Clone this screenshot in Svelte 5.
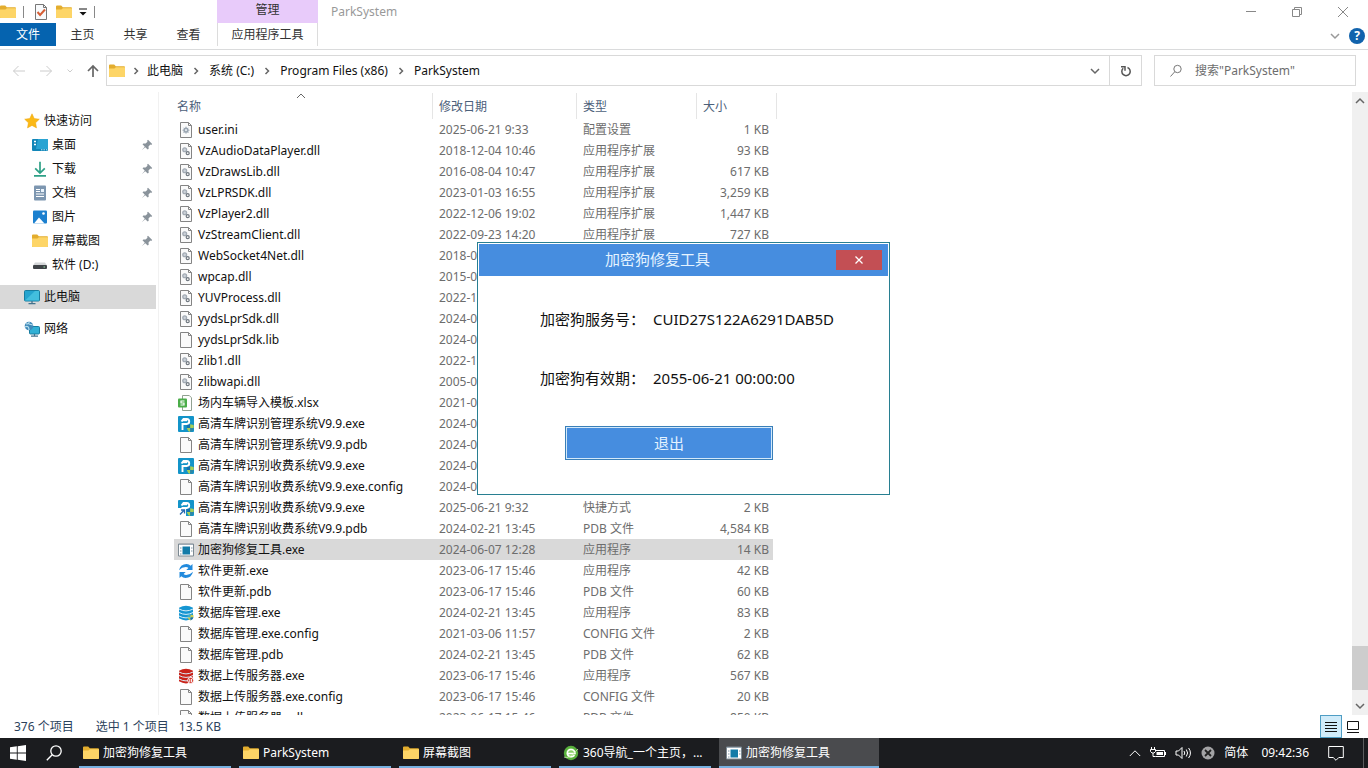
<script lang="ts">
  type FileRow = {
    icon: string;
    name: string;
    date: string;
    type?: string;
    size?: string;
    selected?: boolean;
  };

  const ribbonTabs = ['主页', '共享', '查看'];
  const crumbs = ['此电脑', '系统 (C:)', 'Program Files (x86)', 'ParkSystem'];

  const places = [
    { icon: 'star', label: '快速访问' },
    { icon: 'desktop', label: '桌面', child: true, pinned: true },
    { icon: 'download', label: '下载', child: true, pinned: true },
    { icon: 'document', label: '文档', child: true, pinned: true },
    { icon: 'picture', label: '图片', child: true, pinned: true },
    { icon: 'folder', label: '屏幕截图', child: true, pinned: true },
    { icon: 'drive', label: '软件 (D:)', child: true },
    { icon: 'pc', label: '此电脑', root: true, active: true },
    { icon: 'network', label: '网络', root: true }
  ];

  const files: FileRow[] = [
    { icon: 'ini', name: 'user.ini', date: '2025-06-21 9:33', type: '配置设置', size: '1 KB' },
    { icon: 'dll', name: 'VzAudioDataPlayer.dll', date: '2018-12-04 10:46', type: '应用程序扩展', size: '93 KB' },
    { icon: 'dll', name: 'VzDrawsLib.dll', date: '2016-08-04 10:47', type: '应用程序扩展', size: '617 KB' },
    { icon: 'dll', name: 'VzLPRSDK.dll', date: '2023-01-03 16:55', type: '应用程序扩展', size: '3,259 KB' },
    { icon: 'dll', name: 'VzPlayer2.dll', date: '2022-12-06 19:02', type: '应用程序扩展', size: '1,447 KB' },
    { icon: 'dll', name: 'VzStreamClient.dll', date: '2022-09-23 14:20', type: '应用程序扩展', size: '727 KB' },
    { icon: 'dll', name: 'WebSocket4Net.dll', date: '2018-0' },
    { icon: 'dll', name: 'wpcap.dll', date: '2015-0' },
    { icon: 'dll', name: 'YUVProcess.dll', date: '2022-1' },
    { icon: 'dll', name: 'yydsLprSdk.dll', date: '2024-0' },
    { icon: 'file', name: 'yydsLprSdk.lib', date: '2024-0' },
    { icon: 'dll', name: 'zlib1.dll', date: '2022-1' },
    { icon: 'dll', name: 'zlibwapi.dll', date: '2005-0' },
    { icon: 'sheet', name: '场内车辆导入模板.xlsx', date: '2021-0' },
    { icon: 'park', name: '高清车牌识别管理系统V9.9.exe', date: '2024-0' },
    { icon: 'file', name: '高清车牌识别管理系统V9.9.pdb', date: '2024-0' },
    { icon: 'park', name: '高清车牌识别收费系统V9.9.exe', date: '2024-0' },
    { icon: 'file', name: '高清车牌识别收费系统V9.9.exe.config', date: '2024-0' },
    { icon: 'parklink', name: '高清车牌识别收费系统V9.9.exe', date: '2025-06-21 9:32', type: '快捷方式', size: '2 KB' },
    { icon: 'file', name: '高清车牌识别收费系统V9.9.pdb', date: '2024-02-21 13:45', type: 'PDB 文件', size: '4,584 KB' },
    { icon: 'app', name: '加密狗修复工具.exe', date: '2024-06-07 12:28', type: '应用程序', size: '14 KB', selected: true },
    { icon: 'sync', name: '软件更新.exe', date: '2023-06-17 15:46', type: '应用程序', size: '42 KB' },
    { icon: 'file', name: '软件更新.pdb', date: '2023-06-17 15:46', type: 'PDB 文件', size: '60 KB' },
    { icon: 'db', name: '数据库管理.exe', date: '2024-02-21 13:45', type: '应用程序', size: '83 KB' },
    { icon: 'file', name: '数据库管理.exe.config', date: '2021-03-06 11:57', type: 'CONFIG 文件', size: '2 KB' },
    { icon: 'file', name: '数据库管理.pdb', date: '2024-02-21 13:45', type: 'PDB 文件', size: '62 KB' },
    { icon: 'dbred', name: '数据上传服务器.exe', date: '2023-06-17 15:46', type: '应用程序', size: '567 KB' },
    { icon: 'file', name: '数据上传服务器.exe.config', date: '2023-06-17 15:46', type: 'CONFIG 文件', size: '20 KB' },
    { icon: 'file', name: '数据上传服务器.pdb', date: '2023-06-17 15:46', type: 'PDB 文件', size: '850 KB' }
  ];

  const tasks = [
    { icon: 'folder', label: '加密狗修复工具' },
    { icon: 'folder', label: 'ParkSystem' },
    { icon: 'folder', label: '屏幕截图' },
    { icon: 'browser', label: '360导航_一个主页，...' },
    { icon: 'app', label: '加密狗修复工具', active: true }
  ];
</script>

{#snippet icon(name: string)}
  <svg class="icon" viewBox="0 0 16 16" width="16" height="16" aria-hidden="true">
    {#if name === 'folder'}
      <path d="M0 2.500q0-1 1-1h4.200l1.600 1.700H15q1 0 1 1V13q0 1-1 1H1q-1 0-1-1z" fill="#e3ad2e" />
      <path d="M0 5.600h5.400l1.500-1.400H16V13q0 1-1 1H1q-1 0-1-1z" fill="#fdd567" />
    {:else if name === 'star'}
      <path d="M8 .8l2.200 4.700 5.100.7-3.700 3.600.9 5.100L8 12.400l-4.500 2.500.9-5.100L.7 6.200l5.100-.7z" fill="#fbb917" stroke="#eda40c" stroke-width=".5" />
    {:else if name === 'desktop'}
      <rect y="2" width="16" height="12" rx="1" fill="#1286b8" />
      <path d="M6 2h9q1 0 1 1v9H4z" fill="#2aa4d3" />
      <path d="M2 4.500h2M2 7.500h2" stroke="#fff" stroke-width="1.500" />
      <path d="M9 12.800h1.400M11.500 12.800h1.400M14 12.800h1.200" stroke="#c6ecfa" />
    {:else if name === 'download'}
      <path d="M8 .8v11M3.200 7.300L8 12l4.800-4.700M2 14.800h12" fill="none" stroke="#2ea086" stroke-width="1.700" />
    {:else if name === 'document'}
      <rect x="2" y=".5" width="12" height="15" rx="1" fill="#7d96b0" />
      <path d="M4 4.500h4M4 6.500h4M4 9h8M4 11.500h8" stroke="#fff" />
      <path d="M9 4h3v3H9z" fill="#e9f3fc" />
    {:else if name === 'picture'}
      <rect x="1" y="1.500" width="14" height="13" rx="1" fill="#1c80cf" />
      <path d="M2 14.500L7 8.500l5.500 6z" fill="#fff" />
      <circle cx="11.500" cy="4.500" r="1.300" fill="#fff" />
    {:else if name === 'drive'}
      <path d="M3 5.500h10l2 3H1z" fill="#d4d6d8" />
      <rect x="1" y="8" width="14" height="4" rx="1" fill="#3f4347" />
      <path d="M11.500 10H13" stroke="#92e0a5" />
    {:else if name === 'pc'}
      <rect x=".5" y="1.500" width="15" height="10.500" rx="1" fill="#25a4cf" stroke="#187d9f" />
      <path d="M1 11.500L11 2h4v9.500z" fill="#42bede" />
      <path d="M8 12v2.500M4.500 14.700h7" stroke="#42728d" stroke-width="1.300" />
    {:else if name === 'network'}
      <rect x="5.500" y="5.500" width="10" height="7.500" rx="1" fill="#31b0d5" stroke="#187d9f" />
      <path d="M10.500 13v2M7 15.200h7" stroke="#42728d" stroke-width="1.200" />
      <circle cx="5" cy="5" r="4.300" fill="#3f89b9" />
      <path d="M2 2.700q3 1 3.200-2M1 6q4-2 4 3M5 3l3.800 1" fill="none" stroke="#b9dfed" stroke-width="1.200" />
    {:else if name === 'file' || name === 'ini' || name === 'dll'}
      <path d="M2.500.5h8l3 3v12h-11z" fill="#fafafa" stroke="#848484" />
      <path d="M10.500.5v3h3" fill="none" stroke="#848484" />
      {#if name === 'ini'}
        <circle cx="8" cy="8.200" r="1.900" fill="#dfe4e9" stroke="#98a4b0" stroke-width="1.500" />
        <path d="M8 4.700v1.200M8 10.500v1.200M4.500 8.200h1.200M10.300 8.200h1.200M5.600 5.800l.8.8M10.400 10.600l-.8-.8M5.600 10.600l.8-.8M10.400 5.800l-.8.8" stroke="#98a4b0" />
      {:else if name === 'dll'}
        <circle cx="6.700" cy="6.700" r="1.900" fill="#ccd2d9" stroke="#a3abb4" stroke-width="1.300" />
        <circle cx="9.700" cy="10.200" r="1.500" fill="#eee" stroke="#707880" stroke-width="1.200" />
      {/if}
    {:else if name === 'sheet'}
      <path d="M4.500.5h6.800l2.200 2.300v12.700h-9z" fill="#fff" stroke="#91a191" />
      <rect y="3.500" width="9" height="9" rx="1" fill="#4bad49" />
      <path d="M6.500 6H3v2h3v2H2.500" fill="none" stroke="#fff" stroke-width="1.200" />
    {:else if name === 'park' || name === 'parklink'}
      <rect width="16" height="16" rx="1" fill="#1394c9" />
      <path d="M4.500 14V8h4.300q2.400-.2 2.400-2.500T8.800 3H5.500L3.500 5.500" fill="none" stroke="#fff" stroke-width="1.900" />
      <path d="M4 4.600h5" stroke="#fff" stroke-width="1.200" />
      <path d="M8.800 9l3.400-.8V12H8.800z" fill="#1671ae" />
      <path d="M12.200 8.200l3.500.8v3h-3.500z" fill="#a8cf56" />
      <path d="M8.800 12h3.400v4q-2.800-1-3.400-4z" fill="#a8cf56" />
      <path d="M12.200 12h3.500q-.5 3-3.500 4z" fill="#2f86a5" />
      {#if name === 'parklink'}
        <path d="M0 8h8v8H0z" fill="#fff" />
        <path d="M2 14.500l3.800-4M3 10h3.500v3.500" fill="none" stroke="#286ab1" stroke-width="1.300" />
      {/if}
    {:else if name === 'app'}
      <path d="M.5 2h15v12H.5z" fill="#fff" stroke="#7c8992" />
      <path d="M1 2.500h14" stroke="#9daab4" />
      <path d="M4.500 4.500H12v8H4.500z" fill="#137ba8" />
      <path d="M2 6h1.500M2 9h1.500M2 12h1.500M13 6h1.500M13 9h1.500" stroke="#7f98a8" />
    {:else if name === 'sync'}
      <path d="M1 7.200Q2.500 1 8.500 1q2.600 0 4.200 1.700L14.500 1v6H8.300l2.100-2.100Q9.500 4 7.800 4 4 4 1 7.200zM15 8.800Q13.500 15 7.500 15q-2.600 0-4.200-1.700L1.500 15V9h6.200l-2.100 2.100q.9.900 2.600.9 3.800 0 6.800-3.200z" fill="#238bdd" />
    {:else if name === 'db' || name === 'dbred'}
      <path d="M1 2.800Q8-1.500 15 2.800v10.500q-7 4.300-14 0z" fill={name === 'db' ? '#1696d2' : '#ca231a'} />
      <path d="M1 4q7 3.800 14 0M1 7.500q7 3.800 14 0M1 11q7 3.800 14 0" fill="none" stroke="#d9eff9" />
      {#if name === 'db'}
        <path d="M9.500 10.200l3-.8v3h-3z" fill="#39abd0" />
        <path d="M12.500 9.400l3 .8v2.200h-3zM9.500 12.400h3v3q-2.500-.8-3-3z" fill="#c9cc4d" />
        <path d="M12.500 12.400h3q-.5 2.200-3 3z" fill="#1d71a5" />
      {:else}
        <circle cx="12.700" cy="12.400" r="3" fill="#d43328" stroke="#fff" />
        <path d="M11.800 11v3M13.600 11v3" stroke="#fff" />
      {/if}
    {:else if name === 'browser'}
      <circle cx="8" cy="8" r="6" fill="#8acf69" stroke="#58af3d" stroke-width="2.400" />
      <path d="M4.500 8.500H12q-.5-4-4-4t-3.700 4q.7 3.500 4 3.200 2 0 3.200-1.400" fill="none" stroke="#fff" stroke-width="1.500" />
      <path d="M1 12q5 3 14-8" fill="none" stroke="#d5f0b6" stroke-width=".8" />
    {/if}
  </svg>
{/snippet}

{#snippet chevron(direction: string)}
  <svg class="chevron {direction}" viewBox="0 0 10 10" width="10" height="10" aria-hidden="true">
    {#if direction === 'up'}
      <path d="M1 7l4-4 4 4" />
    {:else if direction === 'down'}
      <path d="M1 3l4 4 4-4" />
    {:else}
      <path d="M3.500 2l3 3-3 3" />
    {/if}
  </svg>
{/snippet}

<div class="screen">
  <header class="ribbon">
    <div class="ribbon-main">
      <div class="quick">
        {@render icon('folder')}
        <span class="rule"></span>
        <svg class="icon props" viewBox="0 0 16 16" width="16" height="16" aria-hidden="true">
          <path d="M2.500.5h8l3 3v12h-11z" fill="#f8fafc" stroke="#777" />
          <path d="M10.500.5v3h3" fill="none" stroke="#777" />
          <path d="M4.500 8l2.600 3L12 5.500" fill="none" stroke="#d65e35" stroke-width="2" />
        </svg>
        {@render icon('folder')}
        <svg viewBox="0 0 8 8" width="8" height="8" aria-hidden="true">
          <path d="M0 1h8" stroke="#111" />
          <path d="M.5 4h7L4 7.500z" fill="#111" />
        </svg>
        <span class="rule"></span>
      </div>
      <div class="tabs">
        <button class="file-tab">文件</button>
        {#each ribbonTabs as tab}
          <button class="tab">{tab}</button>
        {/each}
      </div>
    </div>
    <div class="context">
      <span class="context-title">管理</span>
      <button class="context-tab">应用程序工具</button>
    </div>
    <div class="ribbon-end">
      <div class="title-row">
        <span class="window-title">ParkSystem</span>
        <div class="window-buttons">
          <button aria-label="最小化">
            <svg viewBox="0 0 12 12" width="12" height="12"><path d="M1 5.500h10" /></svg>
          </button>
          <button aria-label="还原">
            <svg viewBox="0 0 12 12" width="12" height="12"><path d="M1.500 3.500h7v7h-7zM3.500 3.500v-2h7v7h-2" /></svg>
          </button>
          <button aria-label="关闭">
            <svg viewBox="0 0 12 12" width="12" height="12"><path d="M1 1l10 10M11 1L1 11" /></svg>
          </button>
        </div>
      </div>
      <div class="help-row">
        <button class="plain light" aria-label="展开功能区">{@render chevron('down')}</button>
        <button class="help" aria-label="帮助">?</button>
      </div>
    </div>
  </header>

  <div class="address-row">
    <div class="history">
      <svg viewBox="0 0 14 14" width="14" height="14"><path d="M13 7H1.500M6.500 2l-5 5 5 5" stroke="#ccc" /></svg>
      <svg viewBox="0 0 14 14" width="14" height="14"><path d="M1 7h11.500M7.500 2l5 5-5 5" stroke="#ccc" /></svg>
      <svg viewBox="0 0 6 6" width="6" height="6"><path d="M.5 1.500L3 4l2.500-2.500" stroke="#ccc" /></svg>
      <svg viewBox="0 0 14 14" width="14" height="14"><path d="M7 13V2M2 7l5-5 5 5" stroke="#666" stroke-width="1.700" /></svg>
    </div>
    <nav class="address" aria-label="地址">
      {@render icon('folder')}
      {#each crumbs as crumb}
        <span class="crumb-sep">{@render chevron('right')}</span>
        <a href="#top">{crumb}</a>
      {/each}
      <button class="plain address-drop" aria-label="以前的位置">{@render chevron('down')}</button>
      <button class="plain refresh" aria-label="刷新">
        <svg viewBox="0 0 12 12" width="12" height="12">
          <path d="M7.500 2.500A4.200 4.200 0 1 1 3.200 3.300M1 1.800h4v4" fill="none" stroke="#555" stroke-width="1.500" />
        </svg>
      </button>
    </nav>
    <label class="search">
      <svg viewBox="0 0 14 14" width="14" height="14" aria-hidden="true">
        <circle cx="8.500" cy="5" r="3.700" /><path d="M5.800 7.700L1.500 12.500" />
      </svg>
      <input type="text" placeholder={'搜索"ParkSystem"'} aria-label="搜索" />
    </label>
  </div>

  <main class="body">
    <nav class="places" aria-label="导航窗格">
      {#each places as place}
        <a href="#top" class="place" class:child={place.child} class:root={place.root} class:active={place.active}>
          {@render icon(place.icon)}
          <span>{place.label}</span>
          {#if place.pinned}
            <svg class="pin" viewBox="0 0 12 12" width="12" height="12" aria-hidden="true">
              <path d="M7 .8L11.200 5l-1 .9-.8-.3L7.500 7.500l.2 2.200-1 .9L4.300 8.200.7 11.300 3.800 7.700 1.500 5.300l.9-.9 2.200.2 1.900-1.900-.4-.9z" />
            </svg>
          {/if}
        </a>
      {/each}
    </nav>

    <section class="files">
      <table>
        <colgroup>
          <col class="col-name" />
          <col class="col-date" />
          <col class="col-type" />
          <col class="col-size" />
        </colgroup>
        <thead>
          <tr>
            <th>名称<span class="sort">{@render chevron('up')}</span></th>
            <th>修改日期</th>
            <th>类型</th>
            <th>大小</th>
          </tr>
        </thead>
        <tbody>
          {#each files as file}
            <tr class:selected={file.selected}>
              <td><span class="file-name">{@render icon(file.icon)}{file.name}</span></td>
              <td>{file.date}</td>
              <td>{file.type ?? ''}</td>
              <td>{file.size ?? ''}</td>
            </tr>
          {/each}
        </tbody>
      </table>
    </section>

    <div class="scrollbar">
      <button class="plain" aria-label="向上滚动">{@render chevron('up')}</button>
      <div class="track-before"></div>
      <div class="thumb"></div>
      <div class="track-after"></div>
      <button class="plain" aria-label="向下滚动">{@render chevron('down')}</button>
    </div>
  </main>

  <footer class="status">
    <span>376 个项目</span>
    <div class="selection">
      <span>选中 1 个项目</span>
      <span>13.5 KB</span>
    </div>
    <div class="views">
      <button class="view on" aria-label="详细信息">
        <svg viewBox="0 0 14 14" width="14" height="14"><path d="M1 2.500h12M1 5.500h12M1 8.500h12M1 11.500h12" /></svg>
      </button>
      <button class="view" aria-label="大图标">
        <svg viewBox="0 0 14 14" width="14" height="14"><path d="M1.500 1.500h11v8h-11zM1 12.500h12" /></svg>
      </button>
    </div>
  </footer>

  <div class="taskbar">
    <button class="start" aria-label="开始">
      <svg viewBox="0 0 16 16" width="16" height="16">
        <path d="M0 2.300l6.800-1v6.300H0zM7.700 1.200L16 0v7.600H7.700zM0 8.400h6.800v6.300l-6.800-1zM7.700 8.400H16V16l-8.300-1.200z" fill="#fff" />
      </svg>
    </button>
    <button class="find" aria-label="搜索">
      <svg viewBox="0 0 16 16" width="16" height="16">
        <circle cx="10" cy="6" r="5.200" fill="none" stroke="#fff" stroke-width="1.300" />
        <path d="M6.200 9.800L.8 15.200" stroke="#fff" stroke-width="1.400" />
      </svg>
    </button>
    <div class="tasks">
      {#each tasks as task}
        <button class="task" class:active={task.active}>
          {@render icon(task.icon)}
          <span>{task.label}</span>
        </button>
      {/each}
    </div>
    <div class="tray">
      <svg viewBox="0 0 12 12" width="12" height="12"><path d="M.8 9L6 3.800 11.200 9" /></svg>
      <svg viewBox="0 0 16 12" width="16" height="12">
        <path d="M6 3.500h8.500v6h-9M1.500 0v2.500M4.500 0v2.500M.5 2.500h5v2L4 6H2L.5 4.500zM3 6v3.500h2.500" />
        <path d="M6.500 5H13v3H6.500zM15 5h1v3h-1z" fill="#fff" stroke="none" />
      </svg>
      <svg viewBox="0 0 17 14" width="17" height="14">
        <path d="M1 5h2.500L7 1.500v11L3.500 9H1zM9 5q1.500 2 0 4M11.300 3.500q2.600 3.500 0 7M13.600 2q3.700 5 0 10" />
      </svg>
      <svg viewBox="0 0 14 14" width="14" height="14">
        <circle cx="7" cy="7" r="6.500" fill="#a3a3a5" stroke="none" />
        <path d="M4 4l6 6M10 4l-6 6" stroke="#222" stroke-width="1.800" />
      </svg>
      <span class="lang">简体</span>
      <time>09:42:36</time>
      <svg class="notice" viewBox="0 0 16 16" width="16" height="16">
        <path d="M.7 1.500h14.600v11h-4.500L8 15.300 5.200 12.500H.7z" />
      </svg>
      <span class="show-desktop"></span>
    </div>
  </div>

  <div class="dialog" role="dialog" aria-labelledby="dialog-title">
    <div class="dialog-bar">
      <h1 id="dialog-title">加密狗修复工具</h1>
      <button class="dialog-close" aria-label="关闭">
        <svg viewBox="0 0 8 8" width="8" height="8"><path d="M.5.5l7 7M7.500.5l-7 7" /></svg>
      </button>
    </div>
    <dl>
      <dt>加密狗服务号：</dt>
      <dd>CUID27S122A6291DAB5D</dd>
      <dt>加密狗有效期：</dt>
      <dd>2055-06-21 00:00:00</dd>
    </dl>
    <button class="exit">退出</button>
  </div>
</div>

<style>
  :global(body) {
    margin: 0;
    background: #fff;
  }

  .screen {
    position: relative;
    display: flex;
    flex-direction: column;
    height: 100vh;
    overflow: hidden;
    font: 12px/16px "Noto Sans", "Noto Sans CJK SC", sans-serif;
    color: #111;
    background: #fff;
  }

  .screen * {
    box-sizing: border-box;
  }

  button,
  input {
    margin: 0;
    padding: 0;
    border: 0;
    background: none;
    font: inherit;
    color: inherit;
  }

  a {
    color: inherit;
    text-decoration: none;
  }

  svg {
    display: block;
    flex-shrink: 0;
  }

  .chevron path {
    fill: none;
    stroke: #666;
    stroke-width: 1.5;
  }

  .plain {
    display: flex;
    align-items: center;
    justify-content: center;
  }

  /* Ribbon */
  .ribbon {
    display: flex;
    height: 50px;
    flex-shrink: 0;
    border-bottom: 1px solid #dadbdc;
  }

  .ribbon-main {
    width: 217px;
  }

  .quick {
    display: flex;
    align-items: center;
    gap: 7px;
    height: 23px;
  }

  .quick .props {
    margin-left: 2px;
  }

  .quick .rule {
    width: 1px;
    height: 12px;
    background: #888;
  }

  .tabs {
    display: flex;
    height: 23px;
  }

  .file-tab {
    width: 56px;
    background: #0563af;
    color: #fff;
  }

  .tab {
    width: 53px;
    color: #333;
  }

  .context {
    display: flex;
    flex-direction: column;
    width: 101px;
  }

  .context-title {
    height: 23px;
    line-height: 20px;
    text-align: center;
    background: #e8cbfa;
    color: #333;
  }

  .context-tab {
    height: 23px;
    border: solid #dcdcdc;
    border-width: 0 1px;
    color: #333;
  }

  .ribbon-end {
    flex: 1;
  }

  .title-row {
    display: flex;
    align-items: center;
    justify-content: space-between;
    height: 23px;
    padding-left: 13px;
  }

  .window-title {
    color: #999;
  }

  .window-buttons {
    display: flex;
    padding-right: 2px;
  }

  .window-buttons button {
    display: flex;
    align-items: center;
    justify-content: center;
    width: 46px;
    height: 20px;
  }

  .window-buttons path {
    fill: none;
    stroke: #888;
  }

  .help-row {
    display: flex;
    align-items: center;
    justify-content: flex-end;
    gap: 9px;
    height: 26px;
    padding-right: 3px;
  }

  .light :global(path) {
    stroke: #999;
  }

  .help {
    width: 16px;
    height: 16px;
    border-radius: 50%;
    background: #1163ad;
    color: #fff;
    font-weight: 700;
    line-height: 16px;
  }

  /* Address bar */
  .address-row {
    display: flex;
    align-items: center;
    height: 42px;
    flex-shrink: 0;
    padding: 0 12px 1px 0;
  }

  .history {
    display: flex;
    align-items: center;
    justify-content: space-between;
    width: 106px;
    padding: 0 6px 0 12px;
  }

  .history svg {
    fill: none;
  }

  .address {
    display: flex;
    align-items: center;
    flex: 1;
    height: 31px;
    padding-left: 2px;
    border: 1px solid #d9d9d9;
  }

  .crumb-sep {
    display: flex;
    justify-content: center;
    width: 26px;
  }

  .icon + .crumb-sep {
    width: 22px;
  }

  .address-drop {
    width: 28px;
    height: 29px;
    margin-left: auto;
  }

  .refresh {
    width: 32px;
    height: 29px;
    border-left: 1px solid #d9d9d9;
  }

  .search {
    display: flex;
    align-items: center;
    gap: 12px;
    width: 202px;
    height: 31px;
    margin-left: 12px;
    padding: 0 14px;
    border: 1px solid #d9d9d9;
  }

  .search svg {
    fill: none;
    stroke: #777;
  }

  .search input {
    flex: 1;
    min-width: 0;
    outline: none;
  }

  .search input::placeholder {
    color: #6d6d6d;
    opacity: 1;
  }

  /* Folder tree and file list */
  .body {
    display: flex;
    flex: 1;
    min-height: 0;
  }

  .places {
    width: 159px;
    padding: 17px 2px 0 0;
    border-right: 1px solid #f1f1f1;
  }

  .place {
    display: flex;
    align-items: center;
    gap: 4px;
    height: 24px;
    padding: 0 3px 0 24px;
  }

  .place.child {
    padding-left: 32px;
  }

  .place.root {
    margin-top: 8px;
  }

  .place.active {
    background: #d9d9d9;
  }

  .pin {
    margin-left: auto;
    fill: #8a939b;
  }

  .files {
    flex: 1;
    min-width: 0;
    padding: 1px 0 0 15px;
    overflow: hidden;
  }

  table {
    width: 603px;
    table-layout: fixed;
    border-spacing: 0;
  }

  .col-name {
    width: 259px;
  }

  .col-date {
    width: 144px;
  }

  .col-type {
    width: 120px;
  }

  .col-size {
    width: 80px;
  }

  th {
    position: relative;
    height: 26px;
    padding: 2px 6px 0;
    border-right: 1px solid #e5e5e5;
    font-weight: 400;
    text-align: left;
    color: #4c607a;
  }

  th:first-child {
    padding-left: 3px;
  }

  .sort {
    position: absolute;
    top: -2px;
    left: 122px;
  }

  .sort :global(path) {
    stroke-width: 1;
  }

  td {
    height: 21px;
    padding: 0 0 0 6px;
    white-space: nowrap;
    overflow: hidden;
    color: #6d6d6d;
  }

  td:first-child {
    padding-left: 4px;
    color: #111;
  }

  td:last-child {
    padding-right: 4px;
    border-right: 4px solid transparent;
    background-clip: padding-box;
    text-align: right;
  }

  .selected td {
    background-color: #d9d9d9;
  }

  .file-name {
    display: flex;
    align-items: center;
    gap: 4px;
  }

  .scrollbar {
    display: flex;
    flex-direction: column;
    width: 16px;
    background: #f0f0f0;
  }

  .scrollbar button {
    height: 18px;
  }

  .track-before {
    flex: 537;
  }

  .thumb {
    flex: 44;
    background: #cdcdcd;
  }

  .track-after {
    flex: 7;
  }

  /* Status bar */
  .status {
    display: flex;
    align-items: center;
    height: 23px;
    flex-shrink: 0;
    padding-left: 14px;
    gap: 22px;
    color: #2b425c;
  }

  .selection {
    display: flex;
    gap: 10px;
  }

  .views {
    display: flex;
    margin-left: auto;
    padding-right: 4px;
  }

  .view {
    display: flex;
    align-items: center;
    justify-content: center;
    width: 22px;
    height: 23px;
    border: 1px solid transparent;
  }

  .view.on {
    border-color: #4f9dc4;
    background: #d0ebf9;
  }

  .view path {
    fill: none;
    stroke: #111;
  }

  /* Taskbar */
  .taskbar {
    display: flex;
    align-items: center;
    height: 30px;
    flex-shrink: 0;
    background: #1b1c1f;
    color: #fff;
  }

  .start {
    padding: 0 10px;
  }

  .find {
    padding: 0 10px;
  }

  .tasks {
    display: flex;
    gap: 8px;
    height: 100%;
    margin-left: 7px;
  }

  .task {
    display: flex;
    align-items: center;
    gap: 4px;
    width: 152px;
    padding: 2px 4px 0;
    border-bottom: 2px solid #76b0e0;
    white-space: nowrap;
  }

  .task.active {
    width: 160px;
    padding: 2px 7px 0;
    background: #4a4b4e;
  }

  .tray {
    display: flex;
    align-items: center;
    gap: 9px;
    height: 100%;
    margin-left: auto;
  }

  .tray svg {
    fill: none;
    stroke: #fff;
  }

  .tray time {
    margin-left: 4px;
  }

  .tray .notice {
    margin: 0 10px;
  }

  .show-desktop {
    width: 5px;
    height: 100%;
    border-left: 1px solid #5b5c5e;
  }

  /* Dongle repair window */
  .dialog {
    position: absolute;
    top: 242px;
    left: 477px;
    width: 413px;
    height: 253px;
    padding: 1px;
    border: 1px solid #287f91;
    background: #fff;
    font-size: 15px;
    line-height: 20px;
  }

  .dialog-bar {
    display: flex;
    align-items: center;
    height: 32px;
    padding-right: 6px;
    background: #468ddf;
  }

  h1 {
    flex: 1;
    margin: 0;
    padding-bottom: 2px;
    font: inherit;
    text-align: center;
    color: #e4f3ff;
  }

  .dialog-close {
    display: flex;
    align-items: center;
    justify-content: center;
    width: 46px;
    height: 20px;
    background: #c34f54;
  }

  .dialog-close path {
    stroke: #fff;
    stroke-width: 1.3;
  }

  dl {
    display: grid;
    grid-template-columns: 105px auto;
    gap: 39px 8px;
    margin: 33px 0 38px 61px;
  }

  dd {
    margin: 0;
  }

  .exit {
    display: block;
    width: 208px;
    height: 34px;
    margin-left: 86px;
    border: 1px solid #3a7fb8;
    background: #468ddf;
    box-shadow: inset 0 0 0 1px #d3e9fa;
    color: #e4f3ff;
  }
</style>
